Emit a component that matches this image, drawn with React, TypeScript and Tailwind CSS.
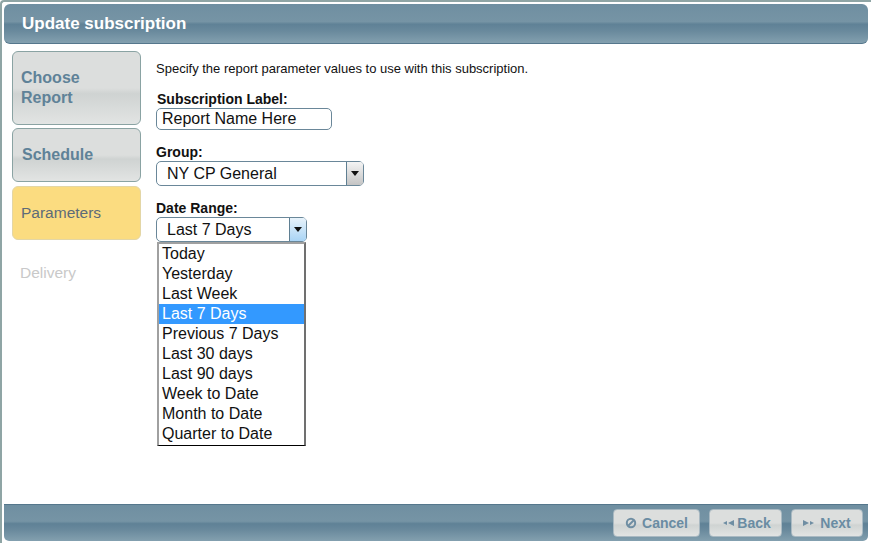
import { ChevronDown } from "lucide-react";

const barBg = "bg-[linear-gradient(to_bottom,#6f8fa1_0%,#7694a5_45%,#5f8196_52%,#6a8a9d_70%,#83a0af_100%)]";
const stepBg = "bg-[linear-gradient(to_bottom,#dcdedd_0%,#dcdedd_50%,#cfd3d2_58%,#e2e4e3_100%)]";

const options = [
	"Today",
	"Yesterday",
	"Last Week",
	"Last 7 Days",
	"Previous 7 Days",
	"Last 30 days",
	"Last 90 days",
	"Week to Date",
	"Month to Date",
	"Quarter to Date",
];

const Arrow = ({ active }: { active?: boolean }) => (
	<span
		className={`flex w-[17px] shrink-0 items-center justify-center self-stretch rounded-r-[3px] border-l border-[#5f7f92] ${
			active
				? "bg-[linear-gradient(to_bottom,#e8f3fb,#a9d4f5)]"
				: "bg-[linear-gradient(to_bottom,#f4f4f4,#c4c4c4)]"
		}`}
	>
		<svg width="8" height="5" viewBox="0 0 8 5">
			<path d="M0 0h8L4 5z" fill="#111" />
		</svg>
	</span>
);

const Select = ({ value, width, active }: { value: string; width: string; active?: boolean }) => (
	<div className={`flex h-[25px] items-center rounded-[5px] border border-[#6a8799] bg-white text-[16px] leading-none text-[#111] ${width}`}>
		<span className="flex-1 pl-[10px]">{value}</span>
		<Arrow active={active} />
	</div>
);

const BackIcon = ({ flip }: { flip?: boolean }) => (
	<svg width="14" height="8" viewBox="0 0 14 8" className={flip ? "" : "rotate-180"}>
		<path d="M0 1l6 3-6 3z" fill="#6f8ea3" />
		<path d="M7 2l4 2-4 2z" fill="#6f8ea3" />
	</svg>
);

const FooterButton = ({ children, width }: { children: React.ReactNode; width: string }) => (
	<div className={`flex h-[28px] items-center justify-center gap-[3px] rounded-[4px] border border-[#a9b9c2] ${stepBg} text-[14px] font-bold text-[#6a8ca3] ${width}`}>
		{children}
	</div>
);

export default function App() {
	return (
		<div className="flex h-[543px] w-[871px] flex-col overflow-hidden rounded-tl-[4px] border-t-2 border-l-2 border-[#8fa5a5] bg-white pt-[2px] pr-[3px] pb-[2px] pl-[2px] font-['Liberation_Sans',Arial,sans-serif]">
			<header className={`flex h-[40px] shrink-0 items-center rounded-[6px] border-b border-[#55778c] ${barBg} pl-[18px] text-[17px] font-bold text-white`}>
				Update subscription
			</header>

			<main className="flex flex-1 gap-[15px] pt-[7px] pl-[8px]">
				<nav className="flex w-[129px] shrink-0 flex-col gap-[3px]">
					<div className={`flex h-[74px] items-center rounded-[6px] border border-[#8aa3a3] ${stepBg} pl-[8px] text-[16px] leading-[20px] font-bold text-[#5f8298]`}>
						Choose
						<br />
						Report
					</div>
					<div className={`flex h-[54px] items-center rounded-[6px] border border-[#8aa3a3] ${stepBg} pl-[9px] text-[16px] font-bold text-[#5f8298]`}>
						Schedule
					</div>
					<div className="mt-[1px] flex h-[54px] items-center rounded-[6px] border border-[#e3d6a6] bg-[#fbdc80] pl-[8px] text-[15.5px] text-[#5d6b78]">
						Parameters
					</div>
					<div className="flex h-[59px] items-center pl-[8px] text-[15.5px] text-[#c9c9c9]">Delivery</div>
				</nav>

				<section className="flex-1 text-[#111]">
					<p className="pt-[10px] text-[13px] leading-[15px]">
						Specify the report parameter values to use with this subscription.
					</p>

					<label className="mt-[15px] block pl-[1px] text-[14px] leading-[16px] font-bold">Subscription Label:</label>
					<div className="mt-[1px] flex h-[22px] w-[176px] items-center rounded-[5px] border border-[#6a8799] pl-[5px] text-[16px] leading-none">
						Report Name Here
					</div>

					<label className="mt-[14px] block text-[14px] leading-[16px] font-bold">Group:</label>
					<div className="mt-[1px]">
						<Select value="NY CP General" width="w-[208px]" />
					</div>

					<label className="mt-[14px] block text-[14px] leading-[16px] font-bold">Date Range:</label>
					<div className="relative mt-[1px] w-[151px]">
						<Select value="Last 7 Days" width="w-[151px]" active />
						<ul className="absolute top-full left-[1px] w-[149px] border border-t-2 border-r-2 border-l-2 border-black border-t-[#a0a0a0] border-l-[#a0a0a0] border-r-[#707070] bg-white pb-[1px] text-[16px] leading-[20px]">
							{options.map((o) => (
								<li key={o} className={o === "Last 7 Days" ? "bg-[#3399ff] pl-[3px] text-white" : "pl-[3px]"}>
									{o}
								</li>
							))}
						</ul>
					</div>
				</section>
			</main>

			<footer className={`flex h-[37px] shrink-0 items-center justify-end gap-[9px] rounded-b-[5px] border-t border-[#55778c] ${barBg} pr-[5px]`}>
				<FooterButton width="w-[87px]">
					<svg width="12" height="12" viewBox="0 0 12 12" className="mr-[2px]">
						<circle cx="6" cy="6" r="4.2" fill="none" stroke="#6f8ea3" strokeWidth="2" />
						<path d="M3 9l6-6" stroke="#6f8ea3" strokeWidth="2" />
					</svg>
					Cancel
				</FooterButton>
				<FooterButton width="w-[73px]">
					<BackIcon />
					Back
				</FooterButton>
				<FooterButton width="w-[72px]">
					<BackIcon flip />
					Next
				</FooterButton>
			</footer>
		</div>
	);
}
